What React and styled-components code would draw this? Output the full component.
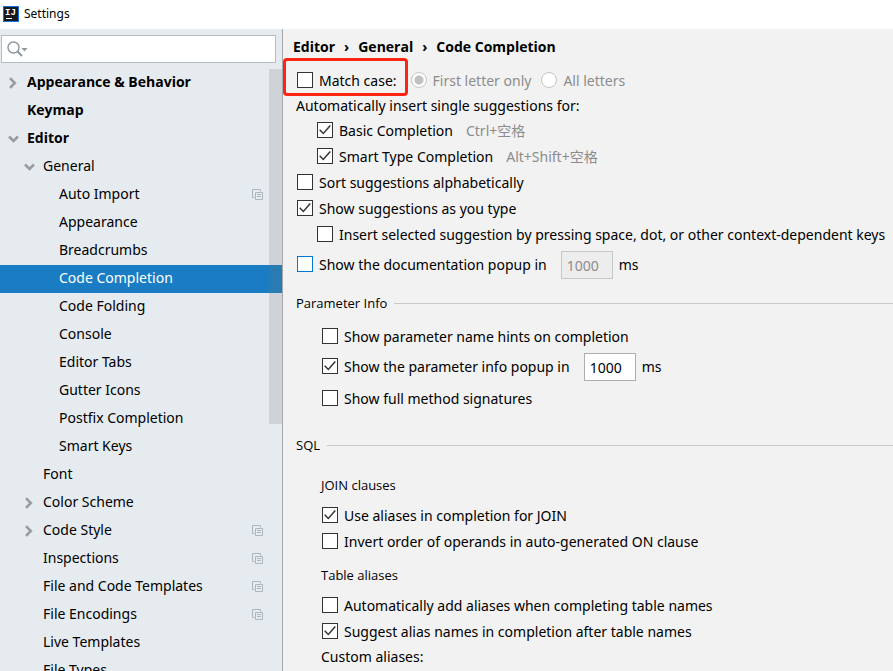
import React, { useState } from "react";
import styled, { createGlobalStyle, css } from "styled-components";

const GlobalStyle = createGlobalStyle`
  * { box-sizing: border-box; }
  body {
    margin: 0;
    overflow: hidden;
    background: #f2f2f2;
    color: #000;
    font: 14px/20px "Noto Sans", "Noto Sans CJK SC", sans-serif;
  }
  button, input { font: inherit; color: inherit; }
`;

const Window = styled.div`
  display: flex;
  flex-direction: column;
  height: 100vh;
`;

const TitleBar = styled.header`
  display: flex;
  flex: none;
  align-items: center;
  gap: 5px;
  height: 29px;
  padding: 0 3px 2px;
  background: #fff;
  font-size: 12px;
`;

const Body = styled.div`
  display: flex;
  flex: 1;
  min-height: 0;
`;

const Sidebar = styled.aside`
  display: flex;
  flex: none;
  flex-direction: column;
  width: 283px;
  background: #e6ebf0;
  border-right: 1px solid #a6a8ab;
`;

const SearchBox = styled.label`
  display: flex;
  flex: none;
  align-items: center;
  height: 28px;
  margin: 6px 6px 6px 1px;
  padding: 0 5px;
  background: #fff;
  border: 1px solid #b5bcc2;
`;

const SearchInput = styled.input`
  flex: 1;
  min-width: 0;
  margin-left: 4px;
  padding: 0;
  border: 0;
  outline: 0;
  background: transparent;
`;

const TreeViewport = styled.nav`
  position: relative;
  flex: 1;
  min-height: 0;
  overflow: hidden;
`;

const TreeList = styled.ul`
  margin: 0;
  padding: 0;
  list-style: none;
`;

const TreeRow = styled.button`
  display: flex;
  align-items: center;
  width: 100%;
  height: 28px;
  padding: 0 19px 2px ${(p) => 8 + p.$level * 16}px;
  border: 0;
  text-align: left;
  white-space: nowrap;
  background: ${(p) => (p.$selected ? "#1a7dc4" : "transparent")};
  color: ${(p) => (p.$selected ? "#fff" : "#000")};
  font-family: ${(p) => (p.$level === 0 ? '"Open Sans", sans-serif' : "inherit")};
  font-weight: ${(p) => (p.$level === 0 ? 700 : 400)};
`;

const ChevronSlot = styled.span`
  display: flex;
  flex: none;
  width: 19px;
  padding-top: 2px;
`;

const RowLabel = styled.span`
  flex: 1;
`;

const ScrollThumb = styled.div`
  position: absolute;
  top: 0;
  right: 0;
  width: 13px;
  height: 355px;
  background: rgba(115, 115, 115, 0.2);
`;

const Content = styled.main`
  flex: 1;
  min-width: 0;
  overflow: hidden;
  white-space: nowrap;
`;

const Breadcrumb = styled.nav`
  display: flex;
  align-items: center;
  gap: 9px;
  height: 29px;
  padding: 6px 0 0 10px;
  font-family: "Open Sans", sans-serif;
  font-weight: 700;
`;

const MatchRow = styled.div`
  display: flex;
  align-items: center;
  gap: 3px;
`;

const CheckLabel = styled.label`
  display: inline-flex;
  align-items: center;
  gap: 6px;
`;

const LabelText = styled.span`
  padding-top: 1px;
`;

const Highlighted = styled(CheckLabel)`
  height: 38px;
  padding: 6px 8px 0 11px;
  border: 3px solid #ff2312;
  border-radius: 4px;
`;

const RadioLabel = styled(CheckLabel)`
  padding-top: 6px;
  margin-right: 7px;
  color: #8c8c8c;
`;

const DelayLabel = styled(CheckLabel)`
  padding-bottom: 2px;
`;

const Options = styled.div`
  padding-left: ${(p) => p.$indent || 0}px;
`;

const OptionRow = styled.div`
  display: flex;
  align-items: center;
  gap: 13px;
  height: 26px;
`;

const FieldRow = styled.div`
  display: flex;
  align-items: center;
  gap: 6px;
  height: 28px;
  margin: 4px 0;
`;

const Caption = styled.div`
  height: ${(p) => (p.$tall ? 26 : 21)}px;
  line-height: ${(p) => (p.$tall ? 26 : 20)}px;
`;

const Shortcut = styled(LabelText)`
  color: #8c8c8c;
`;

const Section = styled.section`
  margin-top: ${(p) => p.$gap}px;
`;

const SectionTitle = styled.h2`
  display: flex;
  align-items: center;
  gap: 7px;
  margin: 0 0 ${(p) => p.$after || 0}px;
  font-family: "Open Sans", sans-serif;
  font-size: 13px;
  font-weight: 400;
  line-height: 20px;

  ${(p) =>
    p.$ruled &&
    css`
      &::after {
        content: "";
        flex: 1;
        height: 1px;
        background: #c9c9c9;
      }
    `}
`;

const BoxFrame = styled.span`
  display: grid;
  flex: none;
  width: 16px;
  height: 16px;

  & > * { grid-area: 1 / 1; }
  & > svg { pointer-events: none; }
`;

const BoxInput = styled.input`
  appearance: none;
  width: 16px;
  height: 16px;
  margin: 0;
  outline: 0;
  background: #fff;
  border: 1px solid ${(p) => (p.$focused ? "#0078d7" : "#333")};
`;

const RadioInput = styled.input`
  appearance: none;
  flex: none;
  width: 16px;
  height: 16px;
  margin: 0;
  border: 1px solid #c4c4c4;
  border-radius: 50%;
  background: #fff;

  &:checked {
    background: radial-gradient(circle, #c0c0c0 4px, #fff 5px);
  }
`;

const DelayInput = styled.input`
  width: 52px;
  height: 28px;
  margin-left: 2px;
  padding: 0 5px;
  border: 1px solid #adadad;
  background: #fff;

  ${DelayLabel} + & {
    margin-left: 8px;
  }

  &:disabled {
    border-color: #c8c8c8;
    background: #ededed;
    color: #8c8c8c;
  }
`;

const TREE = [
  { name: "Appearance & Behavior", level: 0, arrow: "right" },
  { name: "Keymap", level: 0 },
  { name: "Editor", level: 0, arrow: "down" },
  { name: "General", level: 1, arrow: "down" },
  { name: "Auto Import", level: 2, project: true },
  { name: "Appearance", level: 2 },
  { name: "Breadcrumbs", level: 2 },
  { name: "Code Completion", level: 2 },
  { name: "Code Folding", level: 2 },
  { name: "Console", level: 2 },
  { name: "Editor Tabs", level: 2 },
  { name: "Gutter Icons", level: 2 },
  { name: "Postfix Completion", level: 2 },
  { name: "Smart Keys", level: 2 },
  { name: "Font", level: 1 },
  { name: "Color Scheme", level: 1, arrow: "right" },
  { name: "Code Style", level: 1, arrow: "right", project: true },
  { name: "Inspections", level: 1, project: true },
  { name: "File and Code Templates", level: 1, project: true },
  { name: "File Encodings", level: 1, project: true },
  { name: "Live Templates", level: 1 },
  { name: "File Types", level: 1 },
];

function Logo() {
  return (
    <svg width="16" height="16" viewBox="0 0 16 16" aria-hidden="true">
      <rect width="16" height="16" fill="#1372e6" />
      <rect x="1" y="1" width="14" height="14" fill="#17191d" />
      <text x="2" y="9" fill="#fff" fontFamily="Liberation Mono" fontSize="9" fontWeight="700">IJ</text>
      <rect x="3" y="12" width="6" height="1" fill="#fff" />
    </svg>
  );
}

function SearchIcon() {
  return (
    <svg width="21" height="16" viewBox="0 0 21 16" fill="none" aria-hidden="true">
      <circle cx="6.5" cy="6.5" r="5.5" stroke="#8d969d" strokeWidth="1.4" />
      <path d="M10.5 10.5 15 15" stroke="#8d969d" strokeWidth="2" />
      <path d="M14.5 7h6l-3 3.5z" fill="#8d969d" />
    </svg>
  );
}

function Chevron({ direction }) {
  return (
    <svg width="12" height="12" viewBox="0 0 12 12" fill="none" aria-hidden="true">
      <path
        d={direction === "right" ? "M2 1.2 6.8 6 2 10.8" : "M1 3.5 5.5 8 10 3.5"}
        stroke="#9a9da0"
        strokeWidth="2.6"
      />
    </svg>
  );
}

function ProjectIcon() {
  return (
    <svg width="11" height="11" viewBox="0 0 11 11" fill="none" stroke="#adb7be" aria-hidden="true">
      <path d="M2.5 8.5h-2v-8h8v2" />
      <path d="M3.5 3.5h7v7h-7z" />
      <path d="M5 5.5h4M5 7.5h4" />
    </svg>
  );
}

function CheckBox({ initial = false, focused = false }) {
  const [checked, setChecked] = useState(initial);
  return (
    <BoxFrame>
      <BoxInput
        type="checkbox"
        checked={checked}
        $focused={focused}
        onChange={(e) => setChecked(e.target.checked)}
      />
      {checked && (
        <svg width="16" height="16" viewBox="0 0 16 16" fill="none" aria-hidden="true">
          <path d="M2.7 7.7 6.3 11.4 13.3 3.6" stroke="#333" strokeWidth="1.5" />
        </svg>
      )}
    </BoxFrame>
  );
}

function Option({ label, shortcut, checked }) {
  return (
    <OptionRow>
      <CheckLabel>
        <CheckBox initial={checked} />
        <LabelText>{label}</LabelText>
      </CheckLabel>
      {shortcut && <Shortcut>{shortcut}</Shortcut>}
    </OptionRow>
  );
}

function DelayOption({ label, checked, focused, disabled }) {
  return (
    <FieldRow>
      <DelayLabel>
        <CheckBox initial={checked} focused={focused} />
        <LabelText>{label}</LabelText>
      </DelayLabel>
      <DelayInput aria-label={`${label} milliseconds`} defaultValue="1000" disabled={disabled} />
      <span>ms</span>
    </FieldRow>
  );
}

function SettingsTree() {
  const [selected, setSelected] = useState("Code Completion");
  return (
    <TreeViewport aria-label="Settings categories">
      <TreeList>
        {TREE.map(({ name, level, arrow, project }) => (
          <li key={name}>
            <TreeRow
              type="button"
              $level={level}
              $selected={name === selected}
              onClick={() => setSelected(name)}
            >
              <ChevronSlot>{arrow && <Chevron direction={arrow} />}</ChevronSlot>
              <RowLabel>{name}</RowLabel>
              {project && <ProjectIcon />}
            </TreeRow>
          </li>
        ))}
      </TreeList>
      <ScrollThumb />
    </TreeViewport>
  );
}

export default function App() {
  return (
    <Window>
      <GlobalStyle />
      <TitleBar>
        <Logo />
        Settings
      </TitleBar>
      <Body>
        <Sidebar>
          <SearchBox>
            <SearchIcon />
            <SearchInput type="text" aria-label="Search settings" />
          </SearchBox>
          <SettingsTree />
        </Sidebar>
        <Content>
          <Breadcrumb aria-label="Breadcrumb">
            <span>Editor</span>
            <span>›</span>
            <span>General</span>
            <span>›</span>
            <span>Code Completion</span>
          </Breadcrumb>
          <MatchRow>
            <Highlighted>
              <CheckBox />
              <LabelText>Match case:</LabelText>
            </Highlighted>
            <RadioLabel>
              <RadioInput type="radio" name="match" defaultChecked disabled />
              <LabelText>First letter only</LabelText>
            </RadioLabel>
            <RadioLabel>
              <RadioInput type="radio" name="match" disabled />
              <LabelText>All letters</LabelText>
            </RadioLabel>
          </MatchRow>
          <Options $indent={13}>
            <Caption>Automatically insert single suggestions for:</Caption>
          </Options>
          <Options $indent={34}>
            <Option label="Basic Completion" shortcut="Ctrl+空格" checked />
            <Option label="Smart Type Completion" shortcut="Alt+Shift+空格" checked />
          </Options>
          <Options $indent={14}>
            <Option label="Sort suggestions alphabetically" />
            <Option label="Show suggestions as you type" checked />
            <Options $indent={20}>
              <Option label="Insert selected suggestion by pressing space, dot, or other context-dependent keys" />
            </Options>
            <DelayOption label="Show the documentation popup in" focused disabled />
          </Options>
          <Options $indent={13}>
            <Section $gap={14}>
              <SectionTitle $ruled $after={10}>Parameter Info</SectionTitle>
              <Options $indent={26}>
                <Option label="Show parameter name hints on completion" />
                <DelayOption label="Show the parameter info popup in" checked />
                <Option label="Show full method signatures" />
              </Options>
            </Section>
            <Section $gap={24}>
              <SectionTitle $ruled>SQL</SectionTitle>
              <Options $indent={25}>
                <Section $gap={20}>
                  <SectionTitle as="h3" $after={7}>JOIN clauses</SectionTitle>
                  <Options $indent={1}>
                    <Option label="Use aliases in completion for JOIN" checked />
                    <Option label="Invert order of operands in auto-generated ON clause" />
                  </Options>
                </Section>
                <Section $gap={11}>
                  <SectionTitle as="h3" $after={7}>Table aliases</SectionTitle>
                  <Options $indent={1}>
                    <Option label="Automatically add aliases when completing table names" />
                    <Option label="Suggest alias names in completion after table names" checked />
                  </Options>
                  <Caption $tall>Custom aliases:</Caption>
                </Section>
              </Options>
            </Section>
          </Options>
        </Content>
      </Body>
    </Window>
  );
}
